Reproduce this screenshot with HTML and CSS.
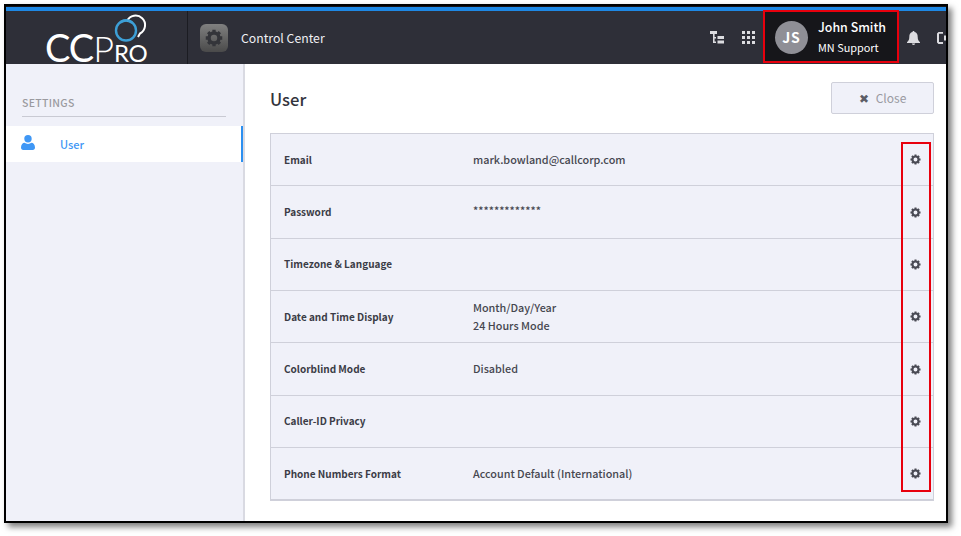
FILE: index.html
```html
<!DOCTYPE html>
<html lang="en">
<head>
<meta charset="utf-8">
<title>User settings</title>
<link rel="stylesheet" href="styles.css">
</head>
<body>
<svg class="defs" width="0" height="0" aria-hidden="true">
  <symbol id="cog" viewBox="0 0 24 24">
    <g fill="none" stroke="currentColor">
      <circle cx="12" cy="12" r="6.6" stroke-width="4.6"/>
      <g stroke-width="4.4">
        <path d="M12 1v5M12 18v5M1 12h5M18 12h5M4.2 4.2l3.6 3.6M16.2 16.2l3.6 3.6M4.2 19.8l3.6-3.6M16.2 7.8l3.6-3.6"/>
      </g>
    </g>
  </symbol>
</svg>
<div class="frame">
  <header class="topbar">
    <div class="brand">
      <div class="logo">
        <svg class="rings" viewBox="0 0 38 30" width="38" height="30">
          <circle class="ring-blue" cx="14" cy="17.500" r="10"/>
          <path class="ring-white" d="M15 8A9.500 9.500 0 1 1 28 20.500L26 24" />
          <path class="ring-blue" d="M8.500 9.200A10 10 0 0 1 20 9.500" />
        </svg>
        <span class="logo-cc">CC</span><span class="logo-p">P</span><span class="logo-ro">RO</span>
      </div>
    </div>
    <div class="app">
      <div class="app-icon"><svg class="app-cog"><use href="#cog"/></svg></div>
      <span class="app-name">Control Center</span>
    </div>
    <div class="tools">
      <svg class="tool" width="14" height="15" viewBox="0 0 14 15"><path d="M0 1h7v3H0zM3 4h1.600v9H3zM3 7h3v1.500H3zM3 11.500h3V13H3zM7.500 6H14v3H7.500zM7.500 10.500H14v3H7.500z" fill="currentColor"/></svg>
      <svg class="tool" width="13" height="13" viewBox="0 0 13 13" fill="currentColor"><path d="M0 0h3v3H0zM5 0h3v3H5zM10 0h3v3h-3zM0 5h3v3H0zM5 5h3v3H5zM10 5h3v3h-3zM0 10h3v3H0zM5 10h3v3H5zM10 10h3v3h-3z"/></svg>
      <div class="user">
        <div class="avatar">JS</div>
        <div class="user-text">
          <div class="user-name">John Smith</div>
          <div class="user-role">MN Support</div>
        </div>
      </div>
      <svg class="tool" width="13" height="14" viewBox="0 0 13 14" fill="currentColor"><path d="M6.500 0c.7 0 1 .5 1 1.100C9.800 1.600 10.700 3.400 10.700 6c0 3 1 4 2.300 5.200V12H0v-.8C1.300 10 2.300 9 2.300 6c0-2.600.9-4.400 3.200-4.900C5.500.5 5.800 0 6.500 0zM4.800 12.600h3.400a1.700 1.400 0 0 1-3.400 0z"/></svg>
      <svg class="tool exit" width="14" height="12" viewBox="0 0 14 12" fill="currentColor"><path d="M0 1.500 1.500 0H6v1.800H2V10h4v2H1.500L0 10.500zM7 3.500h3V1l4 5-4 5V8.500H7z"/></svg>
    </div>
  </header>
  <div class="main">
    <aside class="sidebar">
      <h2 class="side-title">SETTINGS</h2>
      <a class="side-item">
        <svg class="side-icon" width="14" height="15" viewBox="0 0 14 15" fill="currentColor"><circle cx="7" cy="3.800" r="3.700"/><path d="M0 12.500C0 9.500 1.800 7.800 3.500 7.800 4.500 8.500 5.600 8.900 7 8.900s2.500-.4 3.500-1.100c1.700 0 3.500 1.700 3.500 4.700 0 1.500-.8 2.500-2.300 2.500H2.300C.8 15 0 14 0 12.500z"/></svg>
        <span>User</span>
      </a>
    </aside>
    <section class="content">
      <div class="content-head">
        <h1 class="page-title">User</h1>
        <button class="close-btn" type="button"><span class="close-x">✖</span>Close</button>
      </div>
      <div class="panel">
        <div class="row"><div class="label">Email</div><div class="value">mark.bowland@callcorp.com</div><svg class="cog"><use href="#cog"/></svg></div>
        <div class="row"><div class="label">Password</div><div class="value pw">*************</div><svg class="cog"><use href="#cog"/></svg></div>
        <div class="row"><div class="label">Timezone &amp; Language</div><div class="value"></div><svg class="cog"><use href="#cog"/></svg></div>
        <div class="row"><div class="label">Date and Time Display</div><div class="value">Month/Day/Year<br>24 Hours Mode</div><svg class="cog"><use href="#cog"/></svg></div>
        <div class="row"><div class="label">Colorblind Mode</div><div class="value">Disabled</div><svg class="cog"><use href="#cog"/></svg></div>
        <div class="row"><div class="label">Caller-ID Privacy</div><div class="value"></div><svg class="cog"><use href="#cog"/></svg></div>
        <div class="row"><div class="label">Phone Numbers Format</div><div class="value">Account Default (International)</div><svg class="cog"><use href="#cog"/></svg></div>
        <div class="highlight"></div>
      </div>
    </section>
  </div>
</div>
</body>
</html>
```
FILE: styles.css
```css
* { box-sizing: border-box; }
html, body { height: 100%; }
body {
  margin: 0;
  padding: 4px 13px 13px 4px;
  background: #fff;
  font-family: "Noto Sans CJK SC", "Noto Sans", sans-serif;
  overflow: hidden;
}
.defs { position: absolute; }
.frame {
  width: 944px;
  height: 519px;
  border: 2px solid #000;
  background: #14141a;
  box-shadow: 4px 4px 6px rgba(0, 0, 0, .5);
  display: flex;
  flex-direction: column;
  overflow: hidden;
}
.topbar {
  height: 57px;
  flex: none;
  display: flex;
  background: #2e2f38;
  border-top: 4px solid #1e88e5;
  margin-top: 1px;
}
.brand {
  width: 182px;
  flex: none;
  border-right: 1px solid #1b1c22;
  position: relative;
}
.logo {
  position: absolute;
  left: 39px;
  top: 19px;
  color: #fff;
  font-family: "Lato", sans-serif;
  font-weight: 400;
  line-height: 34px;
  white-space: nowrap;
}
.logo-cc { font-size: 38px; letter-spacing: -1px; }
.logo-p { font-size: 36px; font-weight: 300; }
.logo-ro { font-size: 24px; font-weight: 400; letter-spacing: -.5px; }
.rings {
  position: absolute;
  left: 67px;
  top: -17px;
}
.ring-white { fill: none; stroke: #fff; stroke-width: 2; }
.ring-blue { fill: none; stroke: #3d9fd6; stroke-width: 2.400; }
.app {
  display: flex;
  align-items: center;
  padding-left: 12px;
  flex: 1;
}
.app-icon {
  width: 28px;
  height: 28px;
  border-radius: 6px;
  background: linear-gradient(#808080, #4a4a4a);
  color: #34353a;
  display: flex;
  align-items: center;
  justify-content: center;
}
.app-cog { width: 18px; height: 18px; }
.app-name {
  margin-left: 13px;
  color: #f0f0f4;
  font-size: 12.250px;
  line-height: 20px;
}
.tools {
  display: flex;
  align-items: center;
  color: #dcdce0;
  position: relative;
}
.tools .tool { flex: none; }
.tools .tool:nth-child(1) { margin-right: 18px; }
.tools .tool:nth-child(2) { margin-right: 8px; }
.user {
  width: 136px;
  height: 53px;
  align-self: flex-start;
  margin-top: -1px;
  padding-top: 2px;
  background: #16161a;
  border: 2px solid #e8000d;
  display: flex;
  align-items: center;
  padding-left: 10px;
  margin-right: 8px;
}
.avatar {
  width: 33px;
  height: 33px;
  border-radius: 50%;
  background: #8f8f96;
  color: #fff;
  font-size: 14px;
  font-weight: 700;
  line-height: 33px;
  text-align: center;
  letter-spacing: 1px;
}
.user-text { margin-left: 10px; color: #fff; }
.user-name { font-size: 12.400px; line-height: 19px; font-weight: 500; }
.user-role { font-size: 10.900px; line-height: 19px; margin-top: 1px; }
.exit { margin-left: 17px; margin-right: -5px; }
.main { flex: 1; display: flex; min-height: 0; background: #fff; }
.sidebar {
  width: 239px;
  flex: none;
  background: #f0f1f9;
  border-right: 2px solid #d9dae2;
  padding-top: 31px;
}
.side-title {
  margin: 0 17px 0 16px;
  padding-bottom: 5px;
  border-bottom: 1px solid #c9cad3;
  color: #9a9a9f;
  font-size: 10.500px;
  font-weight: 500;
  line-height: 16px;
  letter-spacing: .3px;
}
.side-item {
  display: flex;
  align-items: center;
  height: 36px;
  margin-top: 9px;
  background: #fff;
  border-right: 2px solid #2b8ff0;
  color: #3f97f5;
  padding-left: 15px;
  font-size: 11px;
  font-weight: 500;
}
.side-icon { margin-right: 25px; margin-top: -3px; }
.content { flex: 1; padding: 18px 12px 0 25px; }
.content-head {
  display: flex;
  justify-content: space-between;
  align-items: flex-start;
  height: 51px;
}
.page-title {
  margin: 1px 0 0;
  font-size: 16.600px;
  font-weight: 500;
  line-height: 33px;
  color: #33343c;
}
.close-btn {
  width: 103px;
  height: 32px;
  background: #f0f1f9;
  border: 1px solid #cfd0da;
  border-radius: 2px;
  color: #9a9aa2;
  font-family: inherit;
  font-size: 12px;
  line-height: 20px;
  padding: 0;
}
.close-x { color: #5c5d66; font-size: 12px; margin-right: 7px; }
.panel {
  position: relative;
  background: #f0f1f9;
  border: 1px solid #cfd0da;
}
.row {
  height: 52.350px;
  display: flex;
  align-items: center;
  padding-left: 13px;
  border-bottom: 1px solid #cfd0da;
  color: #3b3c46;
}
.row:last-of-type { border-bottom: 0; }
.label {
  width: 189px;
  font-size: 10px;
  font-weight: 700;
  line-height: 16px;
}
.value {
  flex: 1;
  font-size: 10.800px;
  font-weight: 500;
  line-height: 17.500px;
  color: #45464f;
}
.pw { margin-top: -3px; }
.cog {
  width: 11px;
  height: 11px;
  margin-right: 12px;
  color: #4a4b55;
  flex: none;
}
.highlight {
  position: absolute;
  top: 8px;
  right: 2px;
  width: 30px;
  height: 350px;
  border: 2px solid #e8000d;
  pointer-events: none;
}
```
